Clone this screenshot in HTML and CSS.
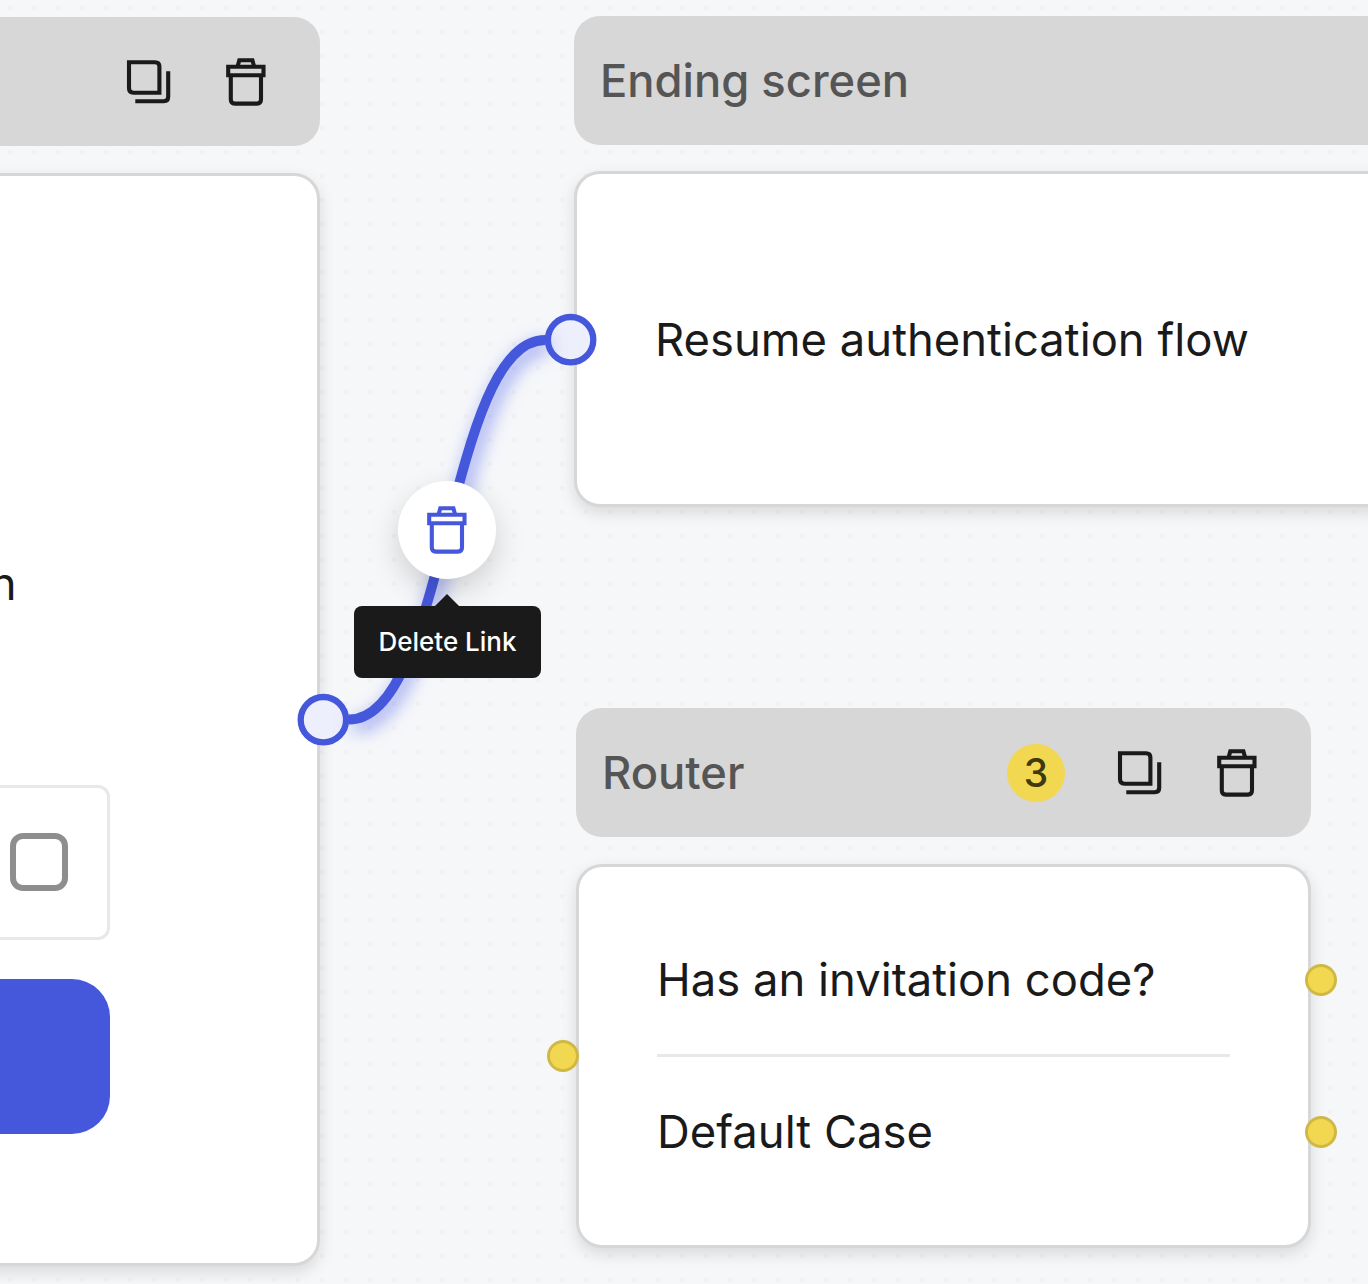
FILE: index.html
```html
<!DOCTYPE html>
<html lang="en">
<head>
<meta charset="utf-8">
<title>Flow editor</title>
<link rel="stylesheet" href="styles.css">
</head>
<body>
<svg class="defs" aria-hidden="true">
  <symbol id="copy" viewBox="0 0 48 48">
    <path d="M4 4.2H30Q34.4 4.2 34.4 8.6V34.7H8.4Q4 34.7 4 30.3Z"/>
    <path d="M43.2 13.2V38.8Q43.2 43.2 38.8 43.2H10.3"/>
  </symbol>
  <symbol id="trash" viewBox="0 0 48 48">
    <path d="M6.2 8.8H41.5V17.3H6.2Z"/>
    <path d="M8.8 17.3V41.6Q8.8 45.6 12.8 45.6H35Q39 45.6 39 41.6V17.3"/>
    <path d="M15.5 8.8L17.3 2.3H30.4L32.2 8.8"/>
  </symbol>
</svg>
<main class="canvas">
  <section class="node node-form">
    <header class="node-header">
      <svg class="icon"><use href="#copy"/></svg>
      <svg class="icon"><use href="#trash"/></svg>
    </header>
    <div class="card form-card">
      <p class="form-text">n</p>
      <div class="field"><span class="checkbox"></span></div>
      <div class="submit"></div>
    </div>
  </section>

  <section class="node node-ending">
    <header class="node-header"><h2>Ending screen</h2></header>
    <div class="card ending-card"><p class="row">Resume authentication flow</p></div>
  </section>

  <section class="node node-router">
    <header class="node-header">
      <h2>Router</h2>
      <span class="count">3</span>
      <svg class="icon"><use href="#copy"/></svg>
      <svg class="icon"><use href="#trash"/></svg>
    </header>
    <div class="card router-card">
      <p class="row">Has an invitation code?</p>
      <p class="row">Default Case</p>
    </div>
  </section>

  <span class="port port-in"></span>
  <span class="port port-case"></span>
  <span class="port port-default"></span>
  <svg class="link" width="1368" height="1284">
    <circle cx="323.4" cy="719.7" r="22.7"/>
    <circle cx="570.6" cy="339.7" r="22.7"/>
    <path d="M349 719.5C447 719.5 447 340 545 340"/>
  </svg>
  <button class="delete" aria-label="Delete Link"><svg class="icon"><use href="#trash"/></svg></button>
  <div class="tooltip">Delete Link</div>
</main>
</body>
</html>
```
FILE: styles.css
```css
* { box-sizing: border-box; }
body { margin: 0; font-family: Inter, "Liberation Sans", sans-serif; color: #1a1a1a; }
h2, p { margin: 0; }
.defs { position: absolute; width: 0; height: 0; }

.canvas {
  position: relative;
  width: 1368px;
  height: 1284px;
  overflow: hidden;
  background: conic-gradient(from 270deg at 4px 4px, #f1f1f2 90deg, transparent 0) 8px 6px / 24px 24px #f5f7f9;
}

.node { position: absolute; width: 735px; display: flex; flex-direction: column; gap: 26.5px; }
.node-form { left: -415px; top: 17px; }
.node-ending { left: 574px; top: 15.5px; width: 840px; }
.node-router { left: 576px; top: 708px; }

.node-header {
  display: flex;
  align-items: center;
  justify-content: flex-end;
  gap: 49px;
  height: 129px;
  padding: 0 50px 0 26px;
  border-radius: 26px;
  background: #d7d7d7;
}
.node-header h2 { flex: 1; font-size: 45.3px; line-height: 60px; font-weight: 500; color: #555; }
.node-ending h2 { padding-top: 2px; }
.count {
  width: 58px;
  height: 58px;
  margin-right: 2px;
  border-radius: 50%;
  background: #f2d750;
  color: #40380f;
  font-size: 39px;
  font-weight: 500;
  line-height: 58px;
  text-align: center;
}
.icon { flex: none; width: 48px; height: 48px; fill: none; stroke: #1a1a1a; stroke-width: 4.1; }

.card {
  border: 3px solid #d7d7d7;
  border-radius: 26px;
  background: #fff;
  padding: 0 78px;
  box-shadow: 0 6px 16px rgba(0, 0, 0, .12);
}
.row { display: flex; align-items: center; height: 152px; font-size: 45.4px; line-height: 60px; }
.ending-card { height: 336px; display: flex; align-items: center; }
.ending-card .row { padding-top: 2px; }
.router-card { height: 384.5px; padding-top: 37.5px; }
.router-card .row + .row { position: relative; }
.router-card .row + .row::before {
  content: "";
  position: absolute;
  left: 0;
  right: 0;
  top: -2px;
  height: 3px;
  background: #e8e8e8;
}

.form-card { height: 1093.5px; padding: 378px 207.5px 0 100px; }
.form-text { padding-right: 93px; font-size: 45.4px; line-height: 60px; text-align: right; }
.field {
  display: flex;
  align-items: center;
  justify-content: flex-end;
  height: 155px;
  margin-top: 171px;
  padding-right: 39px;
  border: 3px solid #e8e8e8;
  border-radius: 12px;
}
.checkbox { width: 58px; height: 58px; border: 6px solid #8e8e8e; border-radius: 13px; }
.submit { height: 155px; margin-top: 39px; border-radius: 38px; background: #4558dc; }

.port {
  position: absolute;
  width: 32px;
  height: 32px;
  border: 3px solid #d0b844;
  border-radius: 50%;
  background: #f2d750;
}
.port-in { left: 547px; top: 1040px; }
.port-case { left: 1305px; top: 964px; }
.port-default { left: 1305px; top: 1116px; }

.link { position: absolute; left: 0; top: 0; pointer-events: none; }
.link circle { fill: #edeffc; stroke: #4558dc; stroke-width: 6.3; }
.link path {
  fill: none;
  stroke: #4558dc;
  stroke-width: 10;
  filter: drop-shadow(4px 6px 9px rgba(69, 88, 236, .65));
}

.delete {
  position: absolute;
  left: 398px;
  top: 481px;
  display: grid;
  place-items: center;
  width: 97.5px;
  height: 97.5px;
  padding: 0;
  border: 0;
  border-radius: 50%;
  background: #fff;
  box-shadow: 0 12px 30px rgba(0, 0, 0, .16);
}
.delete .icon { stroke: #4558dc; }
.tooltip {
  position: absolute;
  left: 354px;
  top: 606px;
  width: 187px;
  height: 72px;
  border-radius: 8px;
  background: #1a1a1a;
  color: #fff;
  font-size: 26px;
  font-weight: 500;
  line-height: 72px;
  text-align: center;
}
.tooltip::before {
  content: "";
  position: absolute;
  left: 81px;
  top: -12px;
  border: 12.5px solid transparent;
  border-top: 0;
  border-bottom-color: #1a1a1a;
}
```
